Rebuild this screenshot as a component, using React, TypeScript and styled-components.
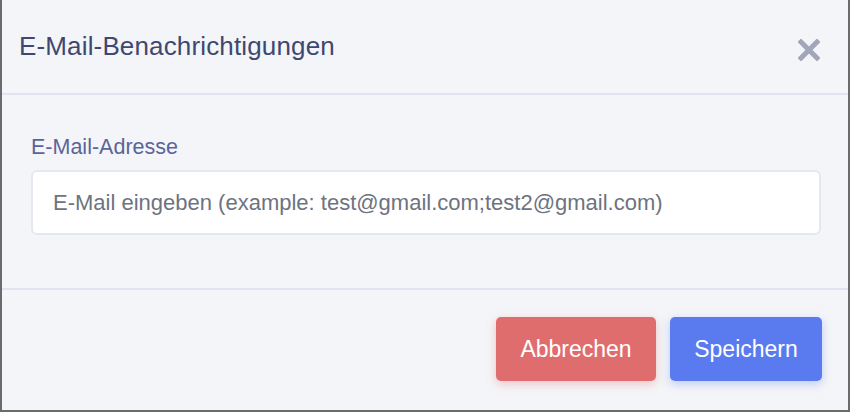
import React from "react";
import styled, { createGlobalStyle } from "styled-components";

const GlobalStyle = createGlobalStyle`
  html, body { margin: 0; padding: 0; background: #f4f5f8; }
  body { font-family: "Liberation Sans", Arial, Helvetica, sans-serif; }
  * { box-sizing: border-box; }
`;

const Frame = styled.div`
  width: 850px;
  height: 412px;
  background: #f4f5f8;
  border-left: 2px solid #6b6b6b;
  border-right: 2px solid #6b6b6b;
  border-bottom: 2px solid #6b6b6b;
  display: flex;
  flex-direction: column;
`;

const Header = styled.div`
  height: 95px;
  display: flex;
  align-items: center;
  justify-content: space-between;
  padding: 0 28px 0 17px;
  border-bottom: 2px solid #e0e4ef;
`;

const Title = styled.h2`
  margin: 0;
  font-size: 26px;
  font-weight: 400;
  color: #3f4870;
  letter-spacing: 0.15px;
`;

const CloseButton = styled.button`
  border: 0;
  background: transparent;
  padding: 0;
  margin-top: 6px;
  width: 22px;
  height: 22px;
  display: flex;
  cursor: pointer;
`;

const Body = styled.div`
  flex: 1;
  padding: 40px 27px 0 29px;
  display: flex;
  flex-direction: column;
  border-bottom: 2px solid #e0e4ef;
`;

const Label = styled.label`
  font-size: 21.5px;
  color: #5b6499;
  line-height: 25px;
  margin-bottom: 10px;
`;

const Input = styled.input`
  height: 65px;
  width: 100%;
  border: 2px solid #e6e8f0;
  border-radius: 6px;
  background: #ffffff;
  padding: 0 20px;
  font-family: inherit;
  font-size: 22px;
  color: #333;
  outline: none;
  &::placeholder { color: #6d7380; }
`;

const Footer = styled.div`
  height: 120px;
  display: flex;
  justify-content: flex-end;
  align-items: flex-start;
  padding: 27px 26px 0 0;
  gap: 14px;
`;

const Button = styled.button<{ $variant: "danger" | "primary" }>`
  height: 64px;
  padding: 0 22px;
  border: 0;
  border-radius: 5px;
  font-family: inherit;
  font-size: 23px;
  color: #ffffff;
  cursor: pointer;
  background: ${(p) => (p.$variant === "danger" ? "#e06d6e" : "#5a7bf0")};
  box-shadow: 0 3px 10px
    ${(p) => (p.$variant === "danger" ? "rgba(224,109,110,0.35)" : "rgba(90,123,240,0.35)")};
  min-width: ${(p) => (p.$variant === "danger" ? "160px" : "152px")};
`;

export default function App() {
  return (
    <>
      <GlobalStyle />
      <Frame>
        <Header>
          <Title>E-Mail-Benachrichtigungen</Title>
          <CloseButton aria-label="close">
            <svg width="22" height="22" viewBox="0 0 22 22">
              <path d="M3 3 L19 19 M19 3 L3 19" stroke="#a2a6b9" strokeWidth="5" strokeLinecap="square" />
            </svg>
          </CloseButton>
        </Header>
        <Body>
          <Label>E-Mail-Adresse</Label>
          <Input placeholder="E-Mail eingeben (example: test@gmail.com;test2@gmail.com)" />
        </Body>
        <Footer>
          <Button $variant="danger">Abbrechen</Button>
          <Button $variant="primary">Speichern</Button>
        </Footer>
      </Frame>
    </>
  );
}
